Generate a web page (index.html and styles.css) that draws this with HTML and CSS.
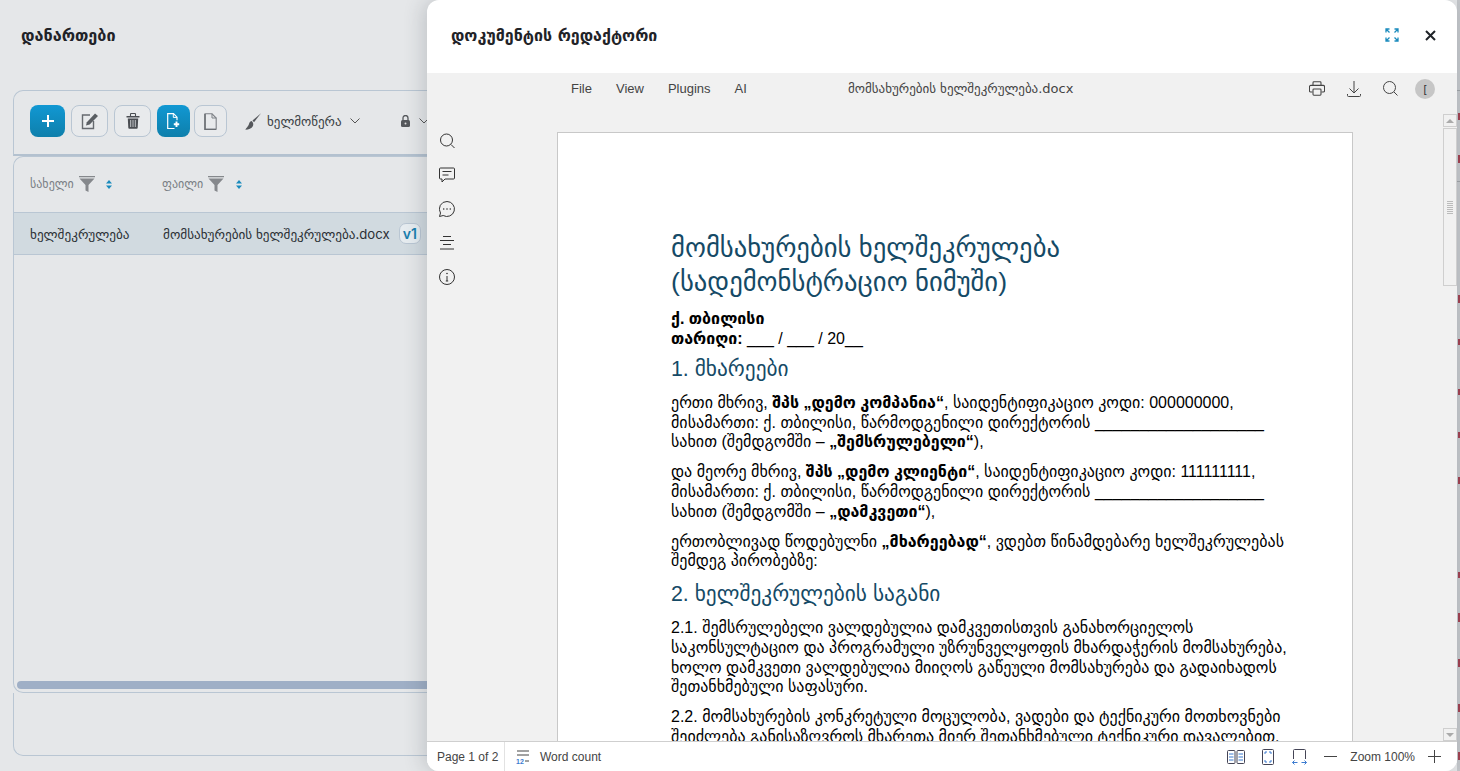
FILE: index.html
```html
<!DOCTYPE html>
<html lang="ka">
<head>
<meta charset="utf-8">
<title>დოკუმენტის რედაქტორი</title>
<link rel="stylesheet" href="styles.css">
</head>
<body>
<div class="app">
  <h1 class="page-title">დანართები</h1>
  <section class="panel">
    <div class="toolbar">
      <button class="btn btn-primary btn-add"><svg width="14" height="14" viewBox="0 0 14 14"><path d="M7 1v12M1 7h12" stroke="#fff" stroke-width="2"/></svg></button>
      <button class="btn btn-edit"><svg width="18" height="18" viewBox="0 0 18 18" fill="none"><path d="M12.500 9v7.500h-11V3h7.500" stroke="#666a6f" stroke-width="1.400"/><path d="M5 13.500l.8-3.300L14 1.500l3 2.500-8.300 8.600z" fill="#5a5e63"/></svg></button>
      <button class="btn btn-edit"><svg width="14" height="16" viewBox="0 0 14 16"><path d="M.5 3h13v1.500H.5z" fill="#4a4d52"/><path d="M4.500 3V1.200a.7.7 0 0 1 .7-.7h3.600a.7.7 0 0 1 .7.7V3" fill="none" stroke="#4a4d52" stroke-width="1.100"/><path d="M1.800 5.500h10.400l-.5 9.200a1 1 0 0 1-1 1H3.300a1 1 0 0 1-1-1z" fill="#4a4d52"/><path d="M4.700 7v7M7 7v7M9.300 7v7" stroke="#cfd2d6" stroke-width=".9"/></svg></button>
      <button class="btn btn-primary btn-file"><svg width="13" height="16" viewBox="0 0 13 16" fill="none"><path d="M7.500 15.500H.7V.7h5.800L10 4.200v3" stroke="#fff" stroke-width="1.200"/><path d="M6.300.7v3.700H10" stroke="#fff" stroke-width="1"/><path d="M9.500 8.500v5.500M6.800 11.200h5.400" stroke="#fff" stroke-width="1.900"/></svg></button>
      <button class="btn btn-blank"><svg width="13" height="17" viewBox="0 0 13 17" fill="none"><path d="M1 .8h7l4.200 4.200v11.200H1z" stroke="#7d8186" stroke-width="1.100"/><path d="M1 1v15.500h11" stroke="#6a6e73" stroke-width="1.500"/><path d="M8 .8V5h4.200" stroke="#7d8186"/></svg></button>
      <div class="sign"><svg width="16" height="17" viewBox="0 0 16 17"><path d="M16 .2L7.500 7.500 9 9.200z" fill="#55585c"/><path d="M6.800 8c-2.300.2-2.500 2.700-3.300 4.300-.5 1-2 2.500-3.200 4.500 3.500 0 6.300-1.500 7.500-3.500.8-1.500.8-3.300-1-5.300z" fill="#55585c"/></svg><span>ხელმოწერა</span><svg class="chev" width="10" height="6" viewBox="0 0 10 6" fill="none"><path d="M.5.500L5 5 9.500.500" stroke="#555"/></svg></div>
      <div class="lock"><svg width="9" height="12" viewBox="0 0 9 12"><rect x="0" y="5" width="9" height="7" rx="1.500" fill="#55585c"/><path d="M2 5.500V3a2.500 2.500 0 0 1 5 0v2.500" fill="none" stroke="#55585c" stroke-width="1.300"/><circle cx="4.500" cy="8.500" r="1" fill="#ddd"/></svg><svg class="chev-sm" width="10" height="6" viewBox="0 0 10 6" fill="none"><path d="M.5.500L5 5 9.500.500" stroke="#555"/></svg></div>
    </div>
    <div class="table">
      <div class="thead">
        <div class="th th-name"><span>სახელი</span><svg class="funnel" width="16" height="16" viewBox="0 0 16 16"><path d="M0 0h16v1.300H0zM.5 2.500h15L9.500 9v7l-3-1.500V9z" fill="#85888c"/></svg><svg class="sort" width="6" height="9" viewBox="0 0 6 9"><path d="M3 0l3 3.500H0zM3 9L0 5.500h6z" fill="#1a8bbd"/></svg></div>
        <div class="th th-file"><span>ფაილი</span><svg class="funnel" width="16" height="16" viewBox="0 0 16 16"><path d="M0 0h16v1.300H0zM.5 2.500h15L9.500 9v7l-3-1.500V9z" fill="#85888c"/></svg><svg class="sort" width="6" height="9" viewBox="0 0 6 9"><path d="M3 0l3 3.500H0zM3 9L0 5.500h6z" fill="#1a8bbd"/></svg></div>
      </div>
      <div class="tr">
        <div class="td td-name">ხელშეკრულება</div>
        <div class="td td-file">მომსახურების ხელშეკრულება.docx</div>
        <span class="badge">v1</span>
      </div>
      <div class="tbody-space"></div>
      <div class="hscroll"></div>
    </div>
    <div class="panel-foot"></div>
  </section>
</div>
<div class="edge"></div>

<aside class="drawer">
  <header class="drawer-head">
    <h2 class="drawer-title">დოკუმენტის რედაქტორი</h2>
    <svg class="expand" width="14" height="14" viewBox="0 0 14 14" fill="none" stroke="#1a8bbd" stroke-width="1.300"><path d="M1 4.500V1h3.500M1 1l3.500 3.500M13 4.500V1H9.500M13 1L9.500 4.500M1 9.500V13h3.500M1 13l3.500-3.500M13 9.500V13H9.500M13 13L9.500 9.500"/></svg>
    <svg class="close" width="11" height="11" viewBox="0 0 11 11" fill="none" stroke="#1f2328" stroke-width="2"><path d="M1 1l9 9M10 1l-9 9"/></svg>
  </header>
  <div class="editor">
    <div class="menubar">
      <nav class="menu"><span>File</span><span>View</span><span>Plugins</span><span>AI</span></nav>
      <div class="doc-name">მომსახურების ხელშეკრულება.docx</div>
      <div class="menu-icons">
        <svg width="16" height="15" viewBox="0 0 18 16" fill="none" stroke="#444" stroke-width="1.200"><path d="M4.500 4.500V1.500a1 1 0 0 1 1-1h7a1 1 0 0 1 1 1v3M4 12H2a1.500 1.500 0 0 1-1.500-1.500V6A1.500 1.500 0 0 1 2 4.500h14A1.500 1.500 0 0 1 17.500 6v4.500A1.500 1.500 0 0 1 16 12h-2"/><rect x="4.500" y="8.500" width="9" height="7" rx="1"/></svg>
        <svg width="14" height="16" viewBox="0 0 14 16" fill="none" stroke="#444" stroke-width="1"><path d="M7 0v11.500M2.500 7.500L7 12l4.500-4.500M.5 13v1.500a1 1 0 0 0 1 1h11a1 1 0 0 0 1-1V13"/></svg>
        <svg width="15" height="15" viewBox="0 0 15 15" fill="none" stroke="#444" stroke-width="1"><circle cx="6.500" cy="6.500" r="6"/><path d="M11 11l3.500 3.500"/></svg>
        <span class="avatar">[</span>
      </div>
    </div>
    <div class="workspace">
      <div class="side">
        <svg width="15" height="15" viewBox="0 0 15 15" fill="none" stroke="#333" stroke-width="1"><circle cx="6.500" cy="6.500" r="6"/><path d="M11 11l3.500 3.500"/></svg>
        <svg width="16" height="15" viewBox="0 0 16 15" fill="none" stroke="#333" stroke-width="1"><path d="M1.500.500h13a1 1 0 0 1 1 1v9a1 1 0 0 1-1 1H6l-3 3v-3H1.500a1 1 0 0 1-1-1v-9a1 1 0 0 1 1-1zM3.500 4h9M3.500 7.500h6"/></svg>
        <svg width="16" height="16" viewBox="0 0 16 16" fill="none" stroke="#333" stroke-width="1"><path d="M8 .500a7.500 7.500 0 1 1-3.800 14L.5 15.500l1-3.500A7.500 7.500 0 0 1 8 .500z"/><circle cx="4.700" cy="8" r=".8" fill="#333" stroke="none"/><circle cx="8" cy="8" r=".8" fill="#333" stroke="none"/><circle cx="11.300" cy="8" r=".8" fill="#333" stroke="none"/></svg>
        <svg width="14" height="14" viewBox="0 0 14 14" fill="none" stroke="#333" stroke-width="1"><path d="M3 .500h8M0 4.500h14M3 8.500h8M0 13h14"/></svg>
        <svg width="16" height="16" viewBox="0 0 16 16" fill="none" stroke="#333" stroke-width="1"><circle cx="8" cy="8" r="7.500"/><path d="M8 7v5M6.800 12h2.400"/><circle cx="8" cy="4.500" r=".8" fill="#333" stroke="none"/></svg>
      </div>
      <div class="canvas">
        <article class="sheet">
          <h1 class="doc-h1">მომსახურების ხელშეკრულება<br>(სადემონსტრაციო ნიმუში)</h1>
          <p class="doc-p tight"><b>ქ. თბილისი</b><br><b>თარიღი:</b> ___ / ___ / 20__</p>
          <h2 class="doc-h2">1. მხარეები</h2>
          <p class="doc-p">ერთი მხრივ, <b>შპს „დემო კომპანია“</b>, საიდენტიფიკაციო კოდი: 000000000,<br>მისამართი: ქ. თბილისი, წარმოდგენილი დირექტორის ___________________<br>სახით (შემდგომში – <b>„შემსრულებელი“</b>),</p>
          <p class="doc-p">და მეორე მხრივ, <b>შპს „დემო კლიენტი“</b>, საიდენტიფიკაციო კოდი: 111111111,<br>მისამართი: ქ. თბილისი, წარმოდგენილი დირექტორის ___________________<br>სახით (შემდგომში – <b>„დამკვეთი“</b>),</p>
          <p class="doc-p">ერთობლივად წოდებულნი <b>„მხარეებად“</b>, ვდებთ წინამდებარე ხელშეკრულებას<br>შემდეგ პირობებზე:</p>
          <h2 class="doc-h2">2. ხელშეკრულების საგანი</h2>
          <p class="doc-p">2.1. შემსრულებელი ვალდებულია დამკვეთისთვის განახორციელოს<br>საკონსულტაციო და პროგრამული უზრუნველყოფის მხარდაჭერის მომსახურება,<br>ხოლო დამკვეთი ვალდებულია მიიღოს გაწეული მომსახურება და გადაიხადოს<br>შეთანხმებული საფასური.</p>
          <p class="doc-p">2.2. მომსახურების კონკრეტული მოცულობა, ვადები და ტექნიკური მოთხოვნები<br>შეიძლება განისაზღვროს მხარეთა მიერ შეთანხმებული ტექნიკური დავალებით.</p>
        </article>
      </div>
      <div class="vscroll">
        <span class="sb-btn"><i class="tri-up"></i></span>
        <span class="sb-thumb"><i class="grip"></i></span>
        <span class="sb-track"></span>
        <span class="sb-btn"><i class="tri-down"></i></span>
      </div>
    </div>
    <footer class="status">
      <span class="pages">Page 1 of 2</span>
      <span class="wc"><svg width="14" height="14" viewBox="0 0 14 14"><path d="M1 1h12M1 5h12M9 11h4" stroke="#444" fill="none"/><text x="0" y="14" class="wc-num">12</text></svg>Word count</span>
      <span class="status-right">
        <svg width="18" height="14" viewBox="0 0 18 14" fill="none" stroke="#445" stroke-width="1"><rect x=".5" y=".5" width="7.500" height="13" rx="1"/><rect x="10" y=".5" width="7.500" height="13" rx="1"/><path d="M2 4h4.500M2 7h4.500M2 10h4.500M11.500 4H16M11.500 7H16M11.500 10H16" stroke="#3b7bd0"/></svg>
        <svg class="fit" width="12" height="16" viewBox="0 0 12 16" fill="none"><rect x=".5" y=".5" width="11" height="15" rx="1" stroke="#445"/><path d="M3 5V3h2M7 3h2v2M9 11v2H7M5 13H3v-2" stroke="#3b7bd0"/></svg>
        <svg class="fitw" width="15" height="16" viewBox="0 0 15 16" fill="none"><path d="M1.500 10V1.500a1 1 0 0 1 1-1h10a1 1 0 0 1 1 1V10" stroke="#445"/><path d="M.5 13.500h5M.5 13.500l2-2M.5 13.500l2 2M14.500 13.500h-5M14.500 13.500l-2-2M14.500 13.500l-2 2" stroke="#3b7bd0"/></svg>
        <svg class="minus" width="13" height="1" viewBox="0 0 13 1"><path d="M0 .5h13" stroke="#444"/></svg>
        <span class="zoom">Zoom 100%</span>
        <svg width="13" height="13" viewBox="0 0 13 13"><path d="M0 6.500h13M6.500 0v13" stroke="#444"/></svg>
      </span>
    </footer>
  </div>
</aside>
</body>
</html>
```

FILE: styles.css
```css
* { box-sizing: border-box; }
html, body { margin: 0; height: 100%; overflow: hidden; }
body { font-family: "Liberation Sans", "DejaVu Sans", sans-serif; background: #e5e7e9; color: #24292f; }
button { font: inherit; padding: 0; cursor: pointer; display: flex; align-items: center; justify-content: center; }

.app { height: 771px; padding: 0 0 15px 13px; display: flex; flex-direction: column; }
.page-title { margin: 0; height: 90px; padding: 26px 0 0 8px; font: bold 16.200px/20px "DejaVu Sans", sans-serif; color: #1f2328; }
.panel { flex: 1; display: flex; flex-direction: column; min-height: 0; }

.toolbar { height: 66px; display: flex; align-items: center; padding: 0 0 3px 16px; border: 1px solid #b9c6d3; border-right: 0; border-bottom: 2px solid #b3c1cf; border-top-left-radius: 10px; flex: none; }
.btn { height: 32px; border-radius: 8px; border: 1px solid #b9c6d3; background: #e8eaec; }
.btn-primary { border: 0; background: linear-gradient(#1198d3, #0e7fab); }
.btn-add { width: 35px; margin-right: 6px; }
.btn-edit { width: 37px; margin-right: 6px; }
.btn-file { width: 33px; margin-right: 4px; }
.btn-blank { width: 33px; }
.sign { display: flex; align-items: center; margin-left: 18px; font: 13px "DejaVu Sans", sans-serif; color: #3a3f44; }
.sign span { margin-left: 6px; }
.sign .chev { margin-left: 8px; }
.lock { margin-left: 41px; display: flex; align-items: center; }
.chev-sm { margin-left: 9px; }

.table { flex: 1; display: flex; flex-direction: column; border: 1px solid #b9c6d3; border-right: 0; border-radius: 10px 0 0 10px; min-height: 0; }
.thead { height: 55px; padding-bottom: 1px; display: flex; align-items: center; flex: none; }
.th { display: flex; align-items: center; font: 12px "DejaVu Sans", sans-serif; color: #7a7f85; }
.th-name { width: 148px; padding-left: 16px; }
.th .funnel { margin-left: 5px; }
.th .sort { margin-left: 11px; }
.th-file .sort { margin-left: 12px; }
.tr { height: 43px; display: flex; align-items: center; background: #d1dae0; border-top: 1px solid #b9c6d3; border-bottom: 1px solid #b9c6d3; font: 13.200px "Inter", "DejaVu Sans", sans-serif; color: #2b3035; flex: none; }
.td-name { width: 149px; padding-left: 16px; }
.badge { margin-left: 9px; border: 1px solid #b9c6d3; border-radius: 7px; padding: 1px 3px; font: 600 14px "Inter", sans-serif; color: #1a7fae; background: #e6ecf0; }
.tbody-space { flex: 1; }
.hscroll { height: 8px; margin: 0 0 3px 3px; background: #9fafc6; border-radius: 4px 0 0 4px; flex: none; }
.panel-foot { height: 63px; border: 1px solid #b9c6d3; border-width: 0 0 1px 1px; border-bottom-left-radius: 10px; flex: none; }

.edge {
  position: absolute; top: 0; right: 0; bottom: 0; width: 3px;
  background:
    linear-gradient(#a04050, #a04050) 1px 113px / 2px 7px no-repeat,
    linear-gradient(#a04050, #a04050) 1px 155px / 2px 8px no-repeat,
    linear-gradient(#a04050, #a04050) 1px 295px / 2px 8px no-repeat,
    linear-gradient(#a04050, #a04050) 1px 339px / 2px 6px no-repeat,
    linear-gradient(#a04050, #a04050) 1px 389px / 2px 6px no-repeat,
    linear-gradient(#a04050, #a04050) 1px 432px / 2px 6px no-repeat,
    linear-gradient(#a04050, #a04050) 1px 477px / 2px 7px no-repeat,
    linear-gradient(#a04050, #a04050) 1px 572px / 2px 6px no-repeat,
    linear-gradient(#a04050, #a04050) 1px 613px / 2px 9px no-repeat,
    linear-gradient(#a04050, #a04050) 1px 659px / 2px 8px no-repeat,
    linear-gradient(#a04050, #a04050) 1px 704px / 2px 8px no-repeat,
    linear-gradient(#a04050, #a04050) 1px 752px / 2px 8px no-repeat,
    repeating-linear-gradient(#c3c6ca 0 45px, #9ea2a6 45px 45.500px);
}

.drawer { position: absolute; left: 427px; top: 0; bottom: 0; width: 1030px; background: #fff; border-radius: 12px; box-shadow: -4px 0 20px rgba(50, 60, 70, .2); display: flex; flex-direction: column; overflow: hidden; }
.drawer-head { height: 73px; display: flex; align-items: center; padding: 0 21px 3px 24px; flex: none; }
.drawer-title { margin: 0; flex: 1; font: bold 16px "DejaVu Sans", sans-serif; color: #1f2328; }
.expand { margin-right: 26px; }

.editor { flex: 1; background: #f1f1f1; display: flex; flex-direction: column; min-height: 0; }
.menubar { height: 41px; display: flex; align-items: flex-start; padding-top: 8px; flex: none; }
.menu { width: 421px; padding-left: 144px; display: flex; gap: 24px; font-size: 13px; line-height: 15px; color: #444; }
.doc-name { font: 13px/15px "DejaVu Sans", sans-serif; color: #444; width: 461px; }
.menu-icons { display: flex; align-items: center; gap: 22px; height: 15px; }
.avatar { width: 20px; height: 20px; margin: 1px 0 0 -5px; border-radius: 50%; background: #c6c6c6; font-size: 11px; line-height: 20px; text-align: center; color: #333; }

.workspace { flex: 1; display: flex; min-height: 0; }
.side { width: 40px; padding-top: 19px; display: flex; flex-direction: column; align-items: center; gap: 18px; flex: none; }
.side svg { height: 16px; }
.canvas { flex: none; width: 976px; padding: 18px 0 0 90px; overflow: hidden; }
.sheet { width: 796px; height: 700px; background: #fff; border: 1px solid #c8c8c8; padding: 98px 0 0 113px; font-family: "Liberation Sans", "DejaVu Sans", sans-serif; color: #000; overflow: hidden; }
.doc-h1 { margin: 0 0 10px; font-weight: 400; font-size: 26.670px; line-height: 34px; color: #154a66; white-space: nowrap; }
.doc-h2 { margin: 3px 0 11px; font-weight: 400; font-size: 21.330px; line-height: 26px; color: #154a66; white-space: nowrap; }
.doc-p { margin: 0 0 10.500px; font-size: 16px; line-height: 19.600px; white-space: nowrap; }
.tight { margin-bottom: 8px; }

.vscroll { width: 14px; display: flex; flex-direction: column; flex: none; gap: 1px; }
.sb-btn { height: 13px; border: 1px solid #cfcfcf; display: flex; align-items: center; justify-content: center; flex: none; }
.sb-thumb { height: 158px; border: 1px solid #cfcfcf; display: flex; align-items: center; justify-content: center; flex: none; }
.sb-track { flex: 1; }
.grip { width: 6px; height: 13px; background: repeating-linear-gradient(#bbb 0 1px, transparent 1px 2px); }
.tri-up { border: 4px solid transparent; border-top: 0; border-bottom: 4px solid #aaa; }
.tri-down { border: 4px solid transparent; border-bottom: 0; border-top: 4px solid #aaa; }

.status { height: 30px; background: #fff; border-top: 1px solid #cfcfcf; display: flex; align-items: center; font-size: 12px; color: #444; flex: none; }
.pages { width: 78px; padding-left: 10px; height: 100%; line-height: 31px; border-right: 1px solid #e2e2e2; }
.wc { display: flex; align-items: center; gap: 10px; margin-left: 11px; }
.wc-num { font-size: 7px; fill: #3b7bd0; font-weight: bold; }
.status-right { margin-left: auto; display: flex; align-items: center; margin-right: 16px; gap: 13px; }
.fit { margin: 0 5px 0 4px; }
.fitw { margin-right: 4px; }
```
